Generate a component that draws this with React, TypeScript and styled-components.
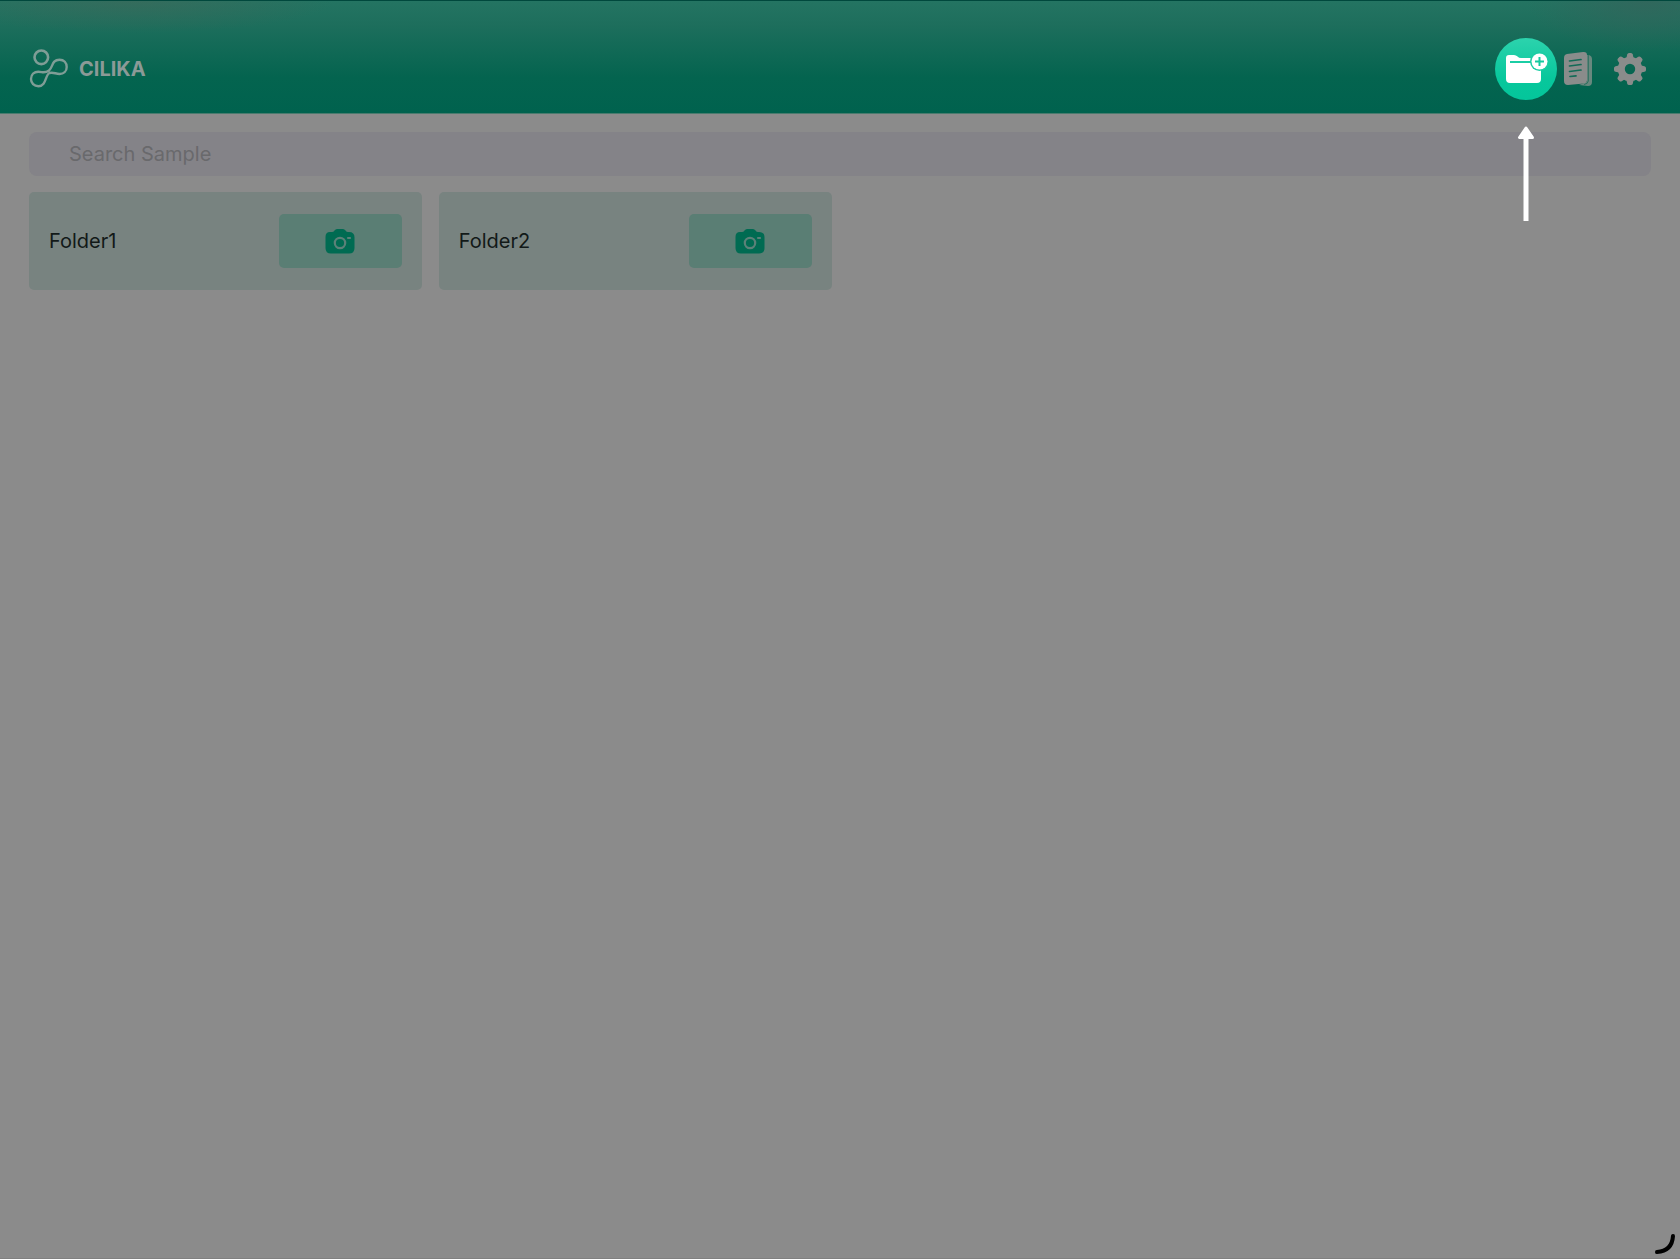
import React from "react";
import styled, { createGlobalStyle } from "styled-components";

const GlobalStyle = createGlobalStyle`
  *, *::before, *::after { box-sizing: border-box; }
  body { margin: 0; background: #8b8b8b; }
  button, input { font: inherit; color: inherit; }
`;

const Page = styled.div`
  position: relative;
  min-height: 100vh;
  background: #8b8b8b;
  border-bottom: 1px solid #808080;
  color: #121918;
  font-family: Inter, "Liberation Sans", sans-serif;
  font-size: 20px;
  line-height: 24px;
`;

const Header = styled.header`
  display: flex;
  align-items: center;
  justify-content: space-between;
  padding: 37px 24px 13px 29px;
  border-top: 1px solid #00483d;
  border-bottom: 1px solid #4a7b6e;
  background:
    radial-gradient(ellipse 200px 32px at 8% 0, rgba(74, 98, 86, 0.45), transparent),
    radial-gradient(ellipse 120px 50px at 98% 0, rgba(54, 98, 90, 0.7), transparent),
    linear-gradient(#247462 0%, #1d6e5c 22%, #04644f 68%, #00624e 100%);
`;

const Brand = styled.div`
  display: flex;
  align-items: center;
  gap: 10px;
`;

const BrandName = styled.h1`
  margin: 0;
  color: #8b9a97;
  font-size: 20px;
  font-weight: 700;
  line-height: 24px;
`;

const Actions = styled.nav`
  display: flex;
  align-items: center;
`;

const IconButton = styled.button`
  position: relative;
  display: grid;
  place-items: center;
  width: 52px;
  height: 62px;
  padding: 0;
  border: 0;
  background: none;
  color: #8a8c8b;
  cursor: pointer;
`;

const Spotlight = styled.span`
  position: absolute;
  inset: 0 -5px;
  display: grid;
  place-items: center;
  border-radius: 50%;
  background: linear-gradient(#2cd3ad, #08c79c 65%, #04c69b);
  color: #fff;
`;

const Pointer = styled.svg`
  position: absolute;
  top: 88px;
  left: 50%;
  transform: translateX(-50%);
  pointer-events: none;
`;

const Main = styled.main`
  display: flex;
  flex-direction: column;
  gap: 16px;
  padding: 18px 29px;
`;

const SearchInput = styled.input`
  width: 100%;
  height: 44px;
  padding: 0 40px;
  border: 0;
  border-radius: 8px;
  outline: 0;
  background: #848388;
  &::placeholder { color: #69696c; opacity: 1; }
`;

const FolderGrid = styled.ul`
  display: grid;
  grid-template-columns: repeat(4, 1fr);
  gap: 17px;
  margin: 0;
  padding: 0;
  list-style: none;
`;

const FolderCard = styled.li`
  display: flex;
  align-items: center;
  justify-content: space-between;
  padding: 22px 20px;
  border-radius: 5px;
  background: #788380;
`;

const CameraButton = styled.button`
  display: grid;
  place-items: center;
  width: 123px;
  height: 54px;
  padding: 0;
  border: 0;
  border-radius: 5px;
  background: #5a7e74;
  color: #006b52;
  cursor: pointer;
`;

const CornerMark = styled.svg`
  position: absolute;
  right: 4px;
  bottom: 3px;
`;

const Logo = () => (
  <svg width="40" height="40" viewBox="0 0 40 40" fill="none" stroke="#7f9d96" aria-hidden="true">
    <circle cx="12.300" cy="8.300" r="6.800" strokeWidth="2.600" />
    <path
      d="M20 21.500C24 18.500 22.500 10.800 30.500 10.800C35 10.800 37.700 14 37.700 18C37.700 22.500 34.500 25 30.500 25C26.500 25 24.500 22.800 20.500 24C16 26 17.500 37.200 9.500 37.200C5 37.200 2 34 2 30C2 25.500 5.300 22.800 9.300 22.800C13.500 22.800 15.500 24.800 20 21.500Z"
      strokeWidth="2.400"
      strokeLinejoin="round"
    />
  </svg>
);

const FolderPlusIcon = () => (
  <svg width="44" height="34" viewBox="0 0 44 34" aria-hidden="true">
    <path d="M2 6Q2 3 5 3H10Q12 3 13.500 4.500Q15 6 17 6H33Q37 6 37 10V27Q37 31 33 31H6Q2 31 2 27Z" fill="currentColor" />
    <path d="M6 10H29" stroke="#1bcda4" strokeWidth="2" />
    <circle cx="35.500" cy="9.500" r="9.500" fill="#1bcda4" />
    <circle cx="35.500" cy="9.500" r="8" fill="currentColor" />
    <path d="M35.500 5V14M31 9.500H40" stroke="#14caa0" strokeWidth="2" />
  </svg>
);

const DocumentsIcon = () => (
  <svg width="30" height="36" viewBox="0 0 30 36" aria-hidden="true">
    <path d="M24 4L26 4Q29 5 29 8V31Q29 35 25 35L16 34L24 31Z" fill="#68887e" />
    <path d="M25.300 4V30Q25 33 21 33.500" fill="none" stroke="#2b705f" strokeWidth="1" />
    <path d="M4 3L20 1Q24 0.500 24 4V29Q24 32 21 32.500L5 34Q1 34 1 30V7Q1 3.500 4 3Z" fill="currentColor" />
    <path d="M6.500 10L18 8.500M6.500 15L18 13.500M6.500 20.500L18 19M7 25.500L13 24.800" stroke="#126b57" strokeWidth="1.700" strokeLinecap="round" />
  </svg>
);

const teeth = [0, 45, 90, 135, 180, 225, 270, 315];

const GearIcon = () => (
  <svg width="34" height="34" viewBox="0 0 34 34" fill="currentColor" aria-hidden="true">
    {teeth.map((angle) => (
      <path key={angle} d="M13 8L14.200 2.500Q14.600 1 16 1H18Q19.400 1 19.800 2.500L21 8Z" transform={`rotate(${angle} 17 17)`} />
    ))}
    <circle cx="17" cy="17" r="8.700" fill="none" stroke="currentColor" strokeWidth="7" />
  </svg>
);

const CameraIcon = () => (
  <svg width="30" height="26" viewBox="0 0 30 26" aria-hidden="true">
    <path d="M5 4H7Q8.500 4 9.500 2.500Q10.500 1 12 1H18Q19.500 1 20.500 2.500Q21.500 4 23 4H24Q29.500 4 29.500 9.500V20Q29.500 25.500 24 25.500H6Q0.500 25.500 0.500 20V9Q0.500 4 5 4Z" fill="currentColor" />
    <circle cx="15" cy="15" r="5.200" fill="none" stroke="#5a8178" strokeWidth="2.200" />
    <path d="M23 10H25" stroke="#5a8178" strokeWidth="2.200" strokeLinecap="round" />
  </svg>
);

const folders = ["Folder1", "Folder2"];

export default function App() {
  return (
    <>
      <GlobalStyle />
      <Page>
        <Header>
          <Brand>
            <Logo />
            <BrandName>CILIKA</BrandName>
          </Brand>
          <Actions aria-label="Main actions">
            <IconButton type="button" aria-label="Create folder">
              <Spotlight>
                <FolderPlusIcon />
              </Spotlight>
              <Pointer width="18" height="96" viewBox="0 0 18 96" aria-hidden="true">
                <path d="M9 8V95" stroke="#fff" strokeWidth="5" />
                <path d="M9 2L2.500 11.500H15.500Z" fill="#fff" stroke="#fff" strokeWidth="3" strokeLinejoin="round" />
              </Pointer>
            </IconButton>
            <IconButton type="button" aria-label="Reports">
              <DocumentsIcon />
            </IconButton>
            <IconButton type="button" aria-label="Settings">
              <GearIcon />
            </IconButton>
          </Actions>
        </Header>
        <Main>
          <SearchInput type="search" placeholder="Search Sample" aria-label="Search Sample" />
          <FolderGrid>
            {folders.map((name) => (
              <FolderCard key={name}>
                <span>{name}</span>
                <CameraButton type="button" aria-label={`Open camera for ${name}`}>
                  <CameraIcon />
                </CameraButton>
              </FolderCard>
            ))}
          </FolderGrid>
        </Main>
        <CornerMark width="22" height="22" viewBox="0 0 22 22" aria-hidden="true">
          <path d="M19 3Q18 18 3 19" fill="none" stroke="#000" strokeWidth="4" strokeLinecap="round" />
        </CornerMark>
      </Page>
    </>
  );
}
